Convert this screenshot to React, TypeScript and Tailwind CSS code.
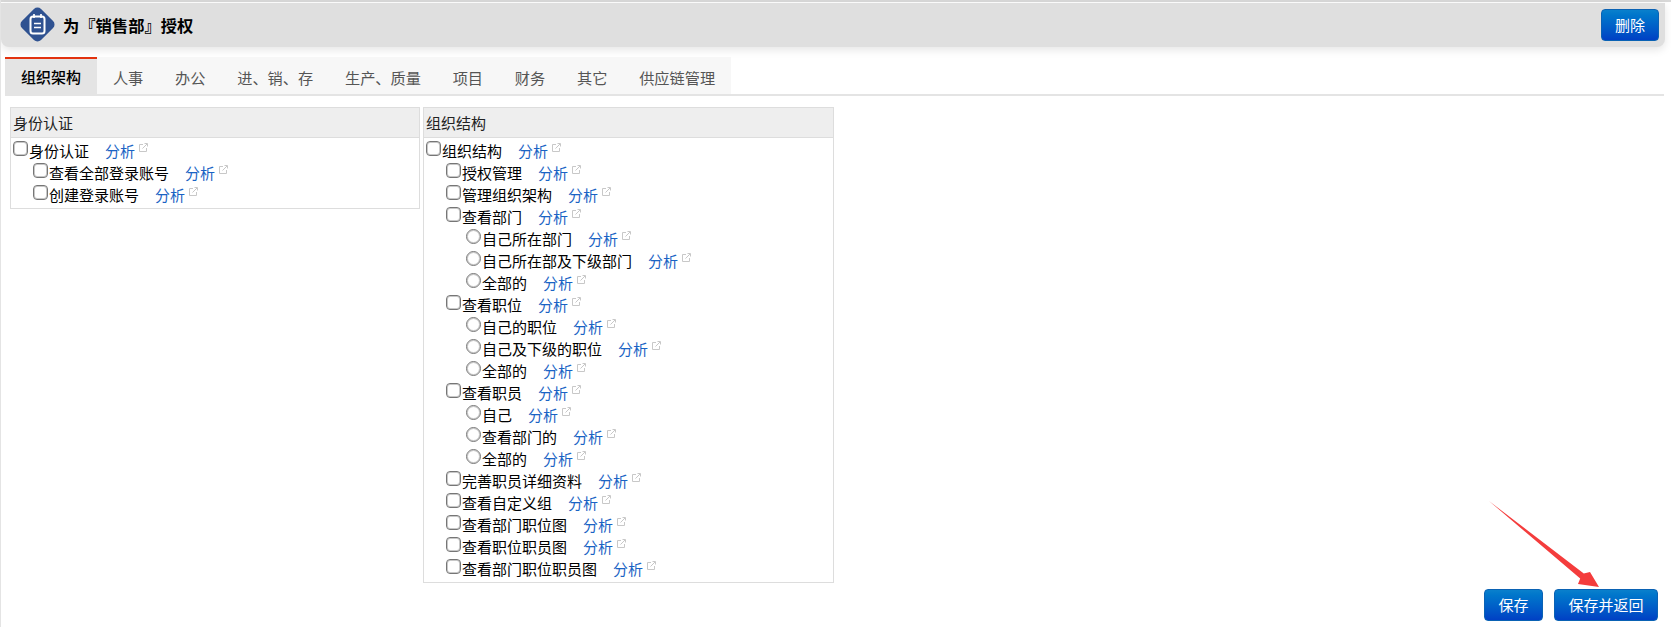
const FONT = "font-['Noto_Sans_CJK_SC','Noto_Sans',sans-serif]";

type Row = { label: string; level: number; type?: "check" | "radio" };

const identityRows: Row[] = [
  { label: "身份认证", level: 0 },
  { label: "查看全部登录账号", level: 1 },
  { label: "创建登录账号", level: 1 },
];

const orgRows: Row[] = [
  { label: "组织结构", level: 0 },
  { label: "授权管理", level: 1 },
  { label: "管理组织架构", level: 1 },
  { label: "查看部门", level: 1 },
  { label: "自己所在部门", level: 2, type: "radio" },
  { label: "自己所在部及下级部门", level: 2, type: "radio" },
  { label: "全部的", level: 2, type: "radio" },
  { label: "查看职位", level: 1 },
  { label: "自己的职位", level: 2, type: "radio" },
  { label: "自己及下级的职位", level: 2, type: "radio" },
  { label: "全部的", level: 2, type: "radio" },
  { label: "查看职员", level: 1 },
  { label: "自己", level: 2, type: "radio" },
  { label: "查看部门的", level: 2, type: "radio" },
  { label: "全部的", level: 2, type: "radio" },
  { label: "完善职员详细资料", level: 1 },
  { label: "查看自定义组", level: 1 },
  { label: "查看部门职位图", level: 1 },
  { label: "查看职位职员图", level: 1 },
  { label: "查看部门职位职员图", level: 1 },
];

const tabs = ["组织架构", "人事", "办公", "进、销、存", "生产、质量", "项目", "财务", "其它", "供应链管理"];

function ExternalIcon() {
  return (
    <svg width="9" height="9" viewBox="0 0 9 9" className="ml-[4px] mt-[-8px] shrink-0" fill="none" stroke="#c8c8c8" strokeWidth="1">
      <path d="M4 1.5H.5v7h7V5" />
      <path d="M3.5 5.5 8 1M5.5.5h3v3" />
    </svg>
  );
}

function PermRow({ row }: { row: Row }) {
  const indent = row.level === 0 ? "pl-[2px]" : row.level === 1 ? "pl-[22px]" : "pl-[42px]";
  return (
    <div className={`flex items-center h-[22px] ${indent}`}>
      <input
        type={row.type === "radio" ? "radio" : "checkbox"}
        name={row.label}
        className={`appearance-none w-[15px] h-[15px] mt-[-5px] shrink-0 border border-[#767676] bg-white shadow-[inset_0_0_0_1px_rgba(118,118,118,0.4)] ${row.type === "radio" ? "rounded-full" : "rounded-[4px]"}`}
      />
      <span className="ml-px text-[15px] text-black whitespace-nowrap">{row.label}</span>
      <a className="ml-[16px] text-[15px] text-[#1a63c4] whitespace-nowrap">分析</a>
      <ExternalIcon />
    </div>
  );
}

function Panel({ title, rows, width }: { title: string; rows: Row[]; width: string }) {
  return (
    <div className={`${width} border border-[#dddddd] self-start`}>
      <div className="h-[30px] bg-[#eeeeee] border-b border-[#dddddd] pl-[2px] pt-[2px] flex items-center text-[15px] text-[#222222]">{title}</div>
      <div className="pt-[2px] pb-[2px]">
        {rows.map((row, i) => (
          <PermRow key={i} row={row} />
        ))}
      </div>
    </div>
  );
}

function BlueButton({ children, width }: { children: string; width: string }) {
  return (
    <button className={`${width} h-[32px] rounded-[4px] border border-[#0a62b4] bg-gradient-to-b from-[#0a80cc] to-[#0040c4] text-white text-[15px]`}>
      {children}
    </button>
  );
}

export default function App() {
  return (
    <div className={`relative w-[1671px] h-[627px] bg-white overflow-hidden border-l border-[#e4e4e4] ${FONT}`}>
      <div className="h-[3px] border-t-2 border-[#d8d8d8]" />
      <div className="h-[44px] mr-[6px] bg-[#dfdfdf] rounded-b-[8px] shadow-[0_3px_8px_rgba(0,0,0,0.1)] flex items-center pl-[18px] pr-[6px]">
        <svg width="37" height="37" viewBox="0 0 37 37" className="shrink-0 mb-[2px]">
          <rect x="5" y="5" width="27" height="27" rx="5" transform="rotate(45 18.5 18.5)" fill="#2f5291" />
          <rect x="11.5" y="10.5" width="14" height="17" rx="2.5" fill="none" stroke="#fff" strokeWidth="2" />
          <path d="M15 8v4M22 8v4M15 17.5h7M15 21.5h7" stroke="#fff" strokeWidth="1.7" />
        </svg>
        <h1 className="ml-[7px] text-[16.3px] font-bold text-black whitespace-nowrap">为『销售部』授权</h1>
        <div className="ml-auto">
          <BlueButton width="w-[58px]">删除</BlueButton>
        </div>
      </div>

      <div className="mt-[10px] ml-[4px] mr-[7px] border-b-2 border-[#e4e4e4] flex">
        {tabs.map((tab, i) => (
          <div
            key={tab}
            className={`h-[37px] flex items-center whitespace-nowrap ${i === 0 ? "px-[16px] text-[15px] bg-[#e4e4e4] text-black font-medium border-t-2 border-[#e2320f] pt-[2px]" : "px-[15.9px] text-[15.2px] bg-[#f7f7f7] text-[#555555] pt-[4px]"}`}
          >
            {tab}
          </div>
        ))}
      </div>

      <div className="mt-[11px] ml-[9px] flex gap-[3px] h-[476px]">
        <Panel title="身份认证" rows={identityRows} width="w-[410px]" />
        <Panel title="组织结构" rows={orgRows} width="w-[411px]" />
      </div>

      <div className="mt-[6px] mr-[13px] flex justify-end gap-[11px]">
        <BlueButton width="w-[59px]">保存</BlueButton>
        <BlueButton width="w-[104px]">保存并返回</BlueButton>
      </div>

      {/* annotation arrow */}
      <svg width="130" height="100" viewBox="0 0 130 100" className="absolute left-[1479px] top-[496px]">
        <path d="M9 5 L103.8 77.6 L110 76 L119 91 L98 88 L100.2 82.4 Z" fill="#f43c3c" />
      </svg>
    </div>
  );
}
